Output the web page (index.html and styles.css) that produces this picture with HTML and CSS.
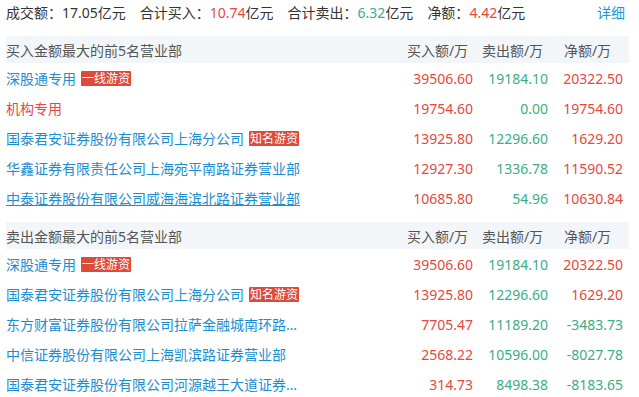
FILE: index.html
```html
<!DOCTYPE html>
<html lang="zh-CN">
<head>
<meta charset="utf-8">
<link rel="stylesheet" href="styles.css">
</head>
<body>
<div class="page">
  <div class="summary">
    <div class="stats">
      <span class="stat">成交额：<span class="num">17.05</span>亿元</span>
      <span class="stat">合计买入：<span class="num up">10.74</span>亿元</span>
      <span class="stat">合计卖出：<span class="num down">6.32</span>亿元</span>
      <span class="stat">净额：<span class="num up">4.42</span>亿元</span>
    </div>
    <a class="detail" href="#">详细</a>
  </div>

  <section class="block">
    <div class="head">
      <div class="name">买入金额最大的前5名营业部</div>
      <div class="col">买入额/万</div>
      <div class="col">卖出额/万</div>
      <div class="col">净额/万</div>
    </div>
    <div class="row">
      <div class="name"><a class="link" href="#">深股通专用</a><span class="tag">一线游资</span></div>
      <div class="col up">39506.60</div>
      <div class="col down">19184.10</div>
      <div class="col up">20322.50</div>
    </div>
    <div class="row">
      <div class="name"><span class="org">机构专用</span></div>
      <div class="col up">19754.60</div>
      <div class="col down">0.00</div>
      <div class="col up">19754.60</div>
    </div>
    <div class="row">
      <div class="name"><a class="link" href="#">国泰君安证券股份有限公司上海分公司</a><span class="tag">知名游资</span></div>
      <div class="col up">13925.80</div>
      <div class="col down">12296.60</div>
      <div class="col up">1629.20</div>
    </div>
    <div class="row">
      <div class="name"><a class="link" href="#">华鑫证券有限责任公司上海宛平南路证券营业部</a></div>
      <div class="col up">12927.30</div>
      <div class="col down">1336.78</div>
      <div class="col up">11590.52</div>
    </div>
    <div class="row">
      <div class="name"><a class="link hover" href="#">中泰证券股份有限公司威海海滨北路证券营业部</a></div>
      <div class="col up">10685.80</div>
      <div class="col down">54.96</div>
      <div class="col up">10630.84</div>
    </div>
  </section>

  <section class="block">
    <div class="head">
      <div class="name">卖出金额最大的前5名营业部</div>
      <div class="col">买入额/万</div>
      <div class="col">卖出额/万</div>
      <div class="col">净额/万</div>
    </div>
    <div class="row">
      <div class="name"><a class="link" href="#">深股通专用</a><span class="tag">一线游资</span></div>
      <div class="col up">39506.60</div>
      <div class="col down">19184.10</div>
      <div class="col up">20322.50</div>
    </div>
    <div class="row">
      <div class="name"><a class="link" href="#">国泰君安证券股份有限公司上海分公司</a><span class="tag">知名游资</span></div>
      <div class="col up">13925.80</div>
      <div class="col down">12296.60</div>
      <div class="col up">1629.20</div>
    </div>
    <div class="row">
      <div class="name"><a class="link" href="#">东方财富证券股份有限公司拉萨金融城南环路证券营业部</a></div>
      <div class="col up">7705.47</div>
      <div class="col down">11189.20</div>
      <div class="col down">-3483.73</div>
    </div>
    <div class="row">
      <div class="name"><a class="link" href="#">中信证券股份有限公司上海凯滨路证券营业部</a></div>
      <div class="col up">2568.22</div>
      <div class="col down">10596.00</div>
      <div class="col down">-8027.78</div>
    </div>
    <div class="row">
      <div class="name"><a class="link" href="#">国泰君安证券股份有限公司河源越王大道证券营业部</a></div>
      <div class="col up">314.73</div>
      <div class="col down">8498.38</div>
      <div class="col down">-8183.65</div>
    </div>
  </section>
</div>
</body>
</html>
```

FILE: styles.css
```css
* { box-sizing: border-box; }
html, body { margin: 0; padding: 0; background: #fff; }
body {
  font-family: "Noto Sans", "Noto Sans CJK SC", sans-serif;
  font-size: 14px;
  color: #333;
}
.page { padding: 0 10px 0 6px; }

.summary {
  display: flex;
  justify-content: space-between;
  align-items: center;
  height: 25px;
  line-height: 25px;
  padding-right: 4px;
}
.stats { display: flex; gap: 14px; }
.num { color: #333; }
.up { color: #e8473f; }
.down { color: #3aae86; }
.summary .up { color: #e8473f; }
.summary .down { color: #3aae86; }
.detail { color: #1a98da; text-decoration: none; }

.block { margin-top: 11px; }
.block + .block { margin-top: 9px; }

.head {
  display: flex;
  align-items: center;
  height: 27px;
  background: #f3f6f9;
  color: #555;
  padding-right: 6px;
}
.head .col { text-align: center; padding-left: 4px; }

.row {
  display: flex;
  align-items: center;
  height: 30px;
  padding-right: 6px;
}
.name {
  flex: 1;
  min-width: 0;
  display: flex;
  align-items: center;
}
.row .name { max-width: 392px; }
.col {
  width: 75px;
  flex: none;
  text-align: right;
}
.link {
  color: #1a8ed2;
  text-decoration: none;
  max-width: 300px;
  white-space: nowrap;
  overflow: hidden;
  text-overflow: ellipsis;
}
.link.hover { text-decoration: underline; }
.org { color: #e8473f; }
.tag {
  margin-left: 5px;
  background: #dc4a3a;
  color: #fff;
  font-size: 12px;
  line-height: 15px;
  height: 15px;
  padding: 0 1px;
  border-radius: 1px;
  white-space: nowrap;
}
```
